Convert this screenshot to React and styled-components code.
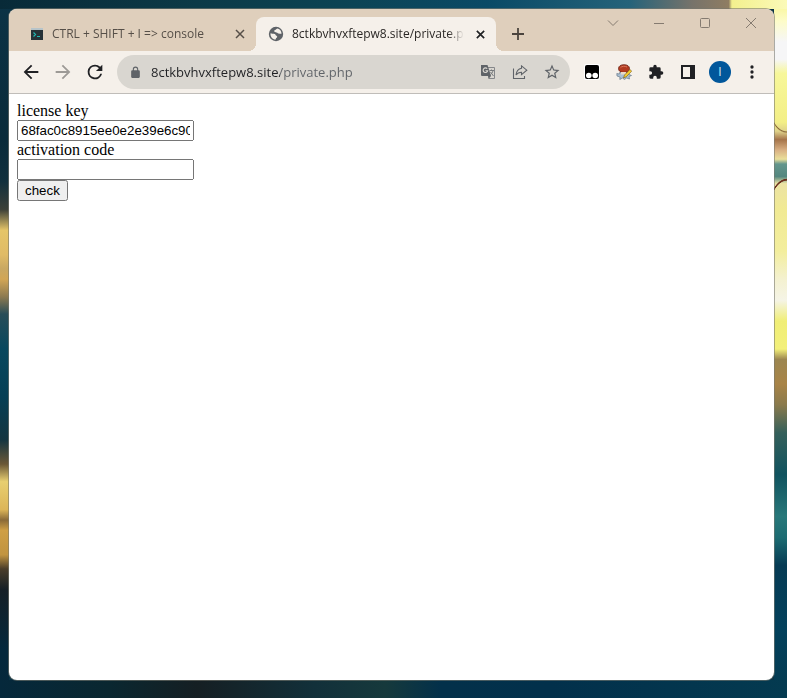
import styled, { createGlobalStyle } from 'styled-components'

const GlobalStyle = createGlobalStyle`
  * {
    box-sizing: border-box;
  }

  body {
    margin: 0;
  }
`;

const Desktop = styled.div`
  display: flex;
  flex-direction: column;
  min-height: 100vh;
  padding: 9px 13px 18px 9px;
  background:
    linear-gradient(90deg, #082a38 0%, #0c3a47 25%, #0c4455 45%, #0a4a66 62%, #25637a 80%, #77736a 88%, #8f7d62 92.6%, #f3f08e 93%, #fbfab8 100%) top / 100% 9px no-repeat,
    linear-gradient(90deg, #05283b 0%, #0a2730 14%, #151f23 25%, #12303a 40%, #16393c 49%, #03304a 56%, #02304b 70%, #043a50 100%) bottom / 100% 18px no-repeat,
    linear-gradient(180deg, #0b3346 0%, #0a2b3a 20%, #12303d 26%, #3c4038 30%, #e5c568 33%, #e0bb66 36.5%, #c9a862 38.5%, #d2a655 40%, #8d7a50 42.5%, #284d58 45%, #08485e 50%, #063f55 57%, #143540 63%, #6b5836 66.5%, #e8cf70 69%, #dcb558 73%, #8a6a38 74.5%, #cf9f45 76%, #c19440 79.5%, #4a3d2a 81.5%, #151f26 84.5%, #04283c 93%, #05283b 100%) left / 9px 100% no-repeat,
    radial-gradient(ellipse 20px 38px at 100% 38px, transparent 92%, #6b2f1c 94%, #6b2f1c 97%, transparent 99%) right 178px / 13px 38px no-repeat,
    radial-gradient(ellipse 18px 26px at 100% 0, transparent 88%, #8a6a3a 92%, transparent 97%) right 108px / 13px 26px no-repeat,
    linear-gradient(180deg, #f7f48f 0%, #fdfcc8 3%, #f6f6f7 6%, #f6f6f7 8.5%, #f7f79a 10.5%, #f3ef86 17.5%, #dfd28a 18.8%, #a5744a 20%, #d9b083 21.5%, #eadf9a 22.8%, #63958c 23.5%, #54877f 25.3%, #ece3a4 26.3%, #f1ea94 30%, #f3ee9d 36%, #f4f1d0 40%, #f5f4e6 43%, #f0ee76 46%, #f3f07a 50%, #9c8650 51.5%, #a88447 55%, #8a7a4c 58%, #35605b 62%, #10535f 68%, #28787a 74%, #1c6c72 77%, #063b54 81%, #03415c 90%, #043a50 100%) right / 13px 100% no-repeat,
    #0a3346;
`;

const Browser = styled.div`
  display: flex;
  flex: 1;
  flex-direction: column;
  overflow: hidden;
  border-radius: 8px;
  background: #fff;
  box-shadow: 0 0 0 1px rgba(120, 120, 110, 0.6);
`;

const TabStrip = styled.div`
  display: flex;
  height: 42px;
  padding-left: 7px;
  background: #dfcfbc;
`;

const Tabs = styled.div`
  display: flex;
  flex: 1;
  min-width: 0;
  padding-top: 8px;
`;

const Tab = styled.div`
  position: relative;
  display: flex;
  flex: 0 1 240px;
  align-items: center;
  gap: 8px;
  min-width: 0;
  padding: 0 8px 0 12px;
  border-radius: 8px 8px 0 0;
  background: ${({ $active }) => ($active ? '#f5f0ea' : 'transparent')};
  color: ${({ $active }) => ($active ? '#2a2725' : '#564f48')};

  &::before,
  &::after {
    content: '';
    position: absolute;
    bottom: 0;
    display: ${({ $active }) => ($active ? 'block' : 'none')};
    width: 8px;
    height: 8px;
  }

  &::before {
    right: 100%;
    background: radial-gradient(circle at 0 0, transparent 8px, #f5f0ea 8px);
  }

  &::after {
    left: 100%;
    background: radial-gradient(circle at 100% 0, transparent 8px, #f5f0ea 8px);
  }
`;

const TabTitle = styled.span`
  flex: 1;
  min-width: 0;
  overflow: hidden;
  font: 12px/18px "Open Sans", "Noto Sans", sans-serif;
  white-space: nowrap;
  mask-image: linear-gradient(90deg, #000 calc(100% - 16px), transparent);
`;

const IconButton = styled.button`
  display: flex;
  flex: none;
  align-items: center;
  justify-content: center;
  width: ${({ $width }) => $width || 32}px;
  height: ${({ $height }) => $height || 32}px;
  padding: 0;
  border: 0;
  background: none;
  color: ${({ $color }) => $color || '#202124'};
`;

const WindowControls = styled.div`
  display: flex;
  flex: none;
`;

const Toolbar = styled.div`
  display: flex;
  align-items: center;
  height: 43px;
  padding: 0 6px;
  border-bottom: 1px solid #c0bdb9;
  background: #f5f0ea;
`;

const Omnibox = styled.div`
  display: flex;
  flex: 1;
  align-items: center;
  min-width: 0;
  height: 34px;
  margin: 0 6px;
  padding: 0 2px 0 10px;
  border-radius: 17px;
  background: #d9d6d0;
`;

const UrlInput = styled.input`
  flex: 1;
  min-width: 0;
  margin-left: 8px;
  padding: 0;
  border: 0;
  outline: 0;
  background: linear-gradient(90deg, #202124 129px, #5f6368 129px);
  background-clip: text;
  color: transparent;
  font: 13px/20px "Open Sans", "Noto Sans", sans-serif;
`;

const Avatar = styled.span`
  width: 22px;
  height: 22px;
  border-radius: 50%;
  background: #01579b;
  color: #dce8f2;
  font: 12px/22px "Open Sans", "Noto Sans", sans-serif;
  text-align: center;
`;

const Page = styled.form`
  display: flex;
  flex-direction: column;
  align-items: flex-start;
  padding: 8px;
  color: #000;
  font: 16px/18px "Liberation Serif", serif;
`;

const Field = styled.input`
  width: 177px;
  height: 21px;
  font-family: "Liberation Sans", sans-serif;
`;

const Submit = styled.button`
  height: 21px;
  font-family: "Liberation Sans", sans-serif;
`;

function Icon({ size = 22, d }) {
  return (
    <svg width={size} height={size} viewBox="0 0 24 24" fill="currentColor" aria-hidden="true">
      <path d={d} />
    </svg>
  )
}

function Line({ size = 12, width = 1, d }) {
  return (
    <svg width={size} height={size} viewBox="0 0 12 12" fill="none" stroke="currentColor" strokeWidth={width} aria-hidden="true">
      <path d={d} />
    </svg>
  )
}

function ConsoleIcon() {
  return (
    <svg width="16" height="16" viewBox="0 0 16 16" aria-hidden="true">
      <path fill="#263238" d="M3 2h12v12H3z" />
      <path fill="#b7c4c9" d="M3 2h12v2H3z" />
      <path fill="none" stroke="#20b9b4" strokeWidth="1.2" d="M5.500 6.500l2 2-2 2M9 10.500h3" />
    </svg>
  )
}

function GlobeIcon() {
  return (
    <svg width="16" height="16" viewBox="0 0 16 16" aria-hidden="true">
      <circle cx="8" cy="8" r="7.200" fill="#5f6368" />
      <path fill="#f5f0ea" d="M9.500 2.500c-1 0-1 .8-1.800 1.200-.8.3-1.700.6-1.500 1.600.2.900 1.300 1 2.300 1.100 1 .1 1.300.9 2.200 1.200.9.300 1.800-.2 2.700.3.400-2.400-1.200-4.700-3.900-5.400z" />
      <path fill="#f5f0ea" d="M2.500 7.200c1 .2 1.500.6 2.500.6 1.100 0 2.300.1 2.600 1.200.3 1 1.600.7 1.600 1.700 0 .9-1 1-1.300 1.700-.2.500 0 .9-.3 1.200C4.600 13.500 2.200 10.700 2.500 7.200z" />
    </svg>
  )
}

function TranslateIcon() {
  return (
    <svg width="16" height="16" viewBox="0 0 16 16" aria-hidden="true">
      <path fill="none" stroke="#85878a" d="M7 3.500h7.500v11H9" />
      <path fill="#5f6368" d="M1 1h6.500l3.500 11H2a1 1 0 0 1-1-1z" />
      <path fill="#5f6368" d="M8 12h3l-2.500 3z" />
      <path fill="none" stroke="#d9d6d0" strokeWidth="1.1" d="M7.200 4.700a2.300 2.300 0 1 0 .5 2H5.500" />
      <path fill="none" stroke="#777a7d" d="M9.500 6.500H14M11.500 5.500v1M13 6.500c-.3 2-1.500 3.300-2.500 4M10.500 8l3 4" />
    </svg>
  )
}

function ShareIcon() {
  return (
    <svg width="16" height="16" viewBox="0 0 16 16" fill="none" stroke="#5f6368" strokeWidth="1.1" aria-hidden="true">
      <path d="M1.500 4.500v10h11V12" />
      <path d="M9.500 1.800l5.300 4.400-5.300 4.400V8.200c-2.500 0-4 .6-5.500 2.800.4-3.400 2-6 5.500-6.700z" />
    </svg>
  )
}

function MonkeyIcon() {
  return (
    <svg width="16" height="16" viewBox="0 0 16 16" aria-hidden="true">
      <rect width="16" height="16" rx="2" fill="#fff" />
      <rect x="1" y="1" width="14" height="14" rx="2" fill="#000" />
      <circle cx="4.800" cy="11.500" r="2.800" fill="#fff" />
      <circle cx="11.200" cy="11.500" r="2.800" fill="#fff" />
    </svg>
  )
}

function EditorIcon() {
  return (
    <svg width="16" height="16" viewBox="0 0 16 16" aria-hidden="true">
      <path fill="#a9bfd3" stroke="#6a7b8b" strokeWidth=".7" d="M.8 9.500l2.400.5.800-2h8l1 2.500 2.500 1-2.500 1 .5 2.500-3-1-2 1.500-2-1.500-2.700 1.500.2-2.500-3-1z" />
      <path fill="#b23a20" stroke="#6d2417" strokeWidth=".8" d="M2.500 4.500C2.500 2 4.800.7 8 .7s5.500 1.300 5.500 3.800S11.500 8.500 8 8.500s-5.500-1.500-5.500-4z" />
      <path fill="none" stroke="#d9785c" d="M4.500 3.700c1-1.500 4.500-2 6.500-.7" />
      <path fill="#e9d9c5" d="M5 8h5v2.500H5z" />
      <path fill="#f7cd2f" stroke="#6e5617" strokeWidth=".6" d="M7.500 14l1-3L14 5.500l1.700 1.700-5.500 5.600z" />
    </svg>
  )
}

function PanelIcon() {
  return (
    <svg width="14" height="14" viewBox="0 0 14 14" aria-hidden="true">
      <path fill="#202124" fillRule="evenodd" d="M0 0h14v14H0zM2 2v10h7V2z" />
    </svg>
  )
}

const BACK = 'M20 11H7.830l5.590-5.590L12 4l-8 8 8 8 1.410-1.410L7.830 13H20z'
const FORWARD = 'M12 4l-1.410 1.410L16.170 11H4v2h12.170l-5.580 5.590L12 20l8-8z'
const RELOAD = 'M17.650 6.350A7.960 7.960 0 0 0 12 4a8 8 0 1 0 7.730 10h-2.080A6 6 0 1 1 12 6c1.660 0 3.140.69 4.220 1.780L13 11h7V4z'
const LOCK = 'M18 8h-1V6A5 5 0 0 0 7 6v2H6a2 2 0 0 0-2 2v10c0 1.100.9 2 2 2h12a2 2 0 0 0 2-2V10a2 2 0 0 0-2-2zM9 6a3 3 0 0 1 6 0v2H9z'
const STAR = 'M22 9.240l-7.190-.62L12 2 9.190 8.630 2 9.240l5.460 4.730L5.820 21 12 17.270 18.180 21l-1.630-7.030zM12 15.400l-3.760 2.270 1-4.280-3.320-2.880 4.380-.38L12 6.100l1.710 4.040 4.380.38-3.320 2.880 1 4.280z'
const PUZZLE = 'M20.500 11H19V7a2 2 0 0 0-2-2h-4V3.500a2.500 2.500 0 0 0-5 0V5H4a2 2 0 0 0-2 2v3.800h1.500a2.700 2.700 0 0 1 0 5.400H2V20c0 1.100.9 2 2 2h3.800v-1.500a2.700 2.700 0 0 1 5.400 0V22H17a2 2 0 0 0 2-2v-4h1.500a2.500 2.500 0 0 0 0-5z'
const MORE = 'M12 8a2 2 0 1 0 0-4 2 2 0 0 0 0 4zm0 2a2 2 0 1 0 0 4 2 2 0 0 0 0-4zm0 6a2 2 0 1 0 0 4 2 2 0 0 0 0-4z'
const CROSS = 'M2 2l8 8M10 2l-8 8'

function App() {
  return (
    <>
      <GlobalStyle />
      <Desktop>
        <Browser>
          <TabStrip>
            <Tabs>
              <Tab>
                <ConsoleIcon />
                <TabTitle>CTRL + SHIFT + I =&gt; console</TabTitle>
                <IconButton $width={16} $height={16} $color="#564f48" aria-label="Close tab">
                  <Line d={CROSS} width={1.5} />
                </IconButton>
              </Tab>
              <Tab $active>
                <GlobeIcon />
                <TabTitle>8ctkbvhvxftepw8.site/private.php</TabTitle>
                <IconButton $width={16} $height={16} aria-label="Close tab">
                  <Line size={11} d={CROSS} width={1.8} />
                </IconButton>
              </Tab>
              <IconButton $width={44} $height={34} $color="#4b443e" aria-label="New tab">
                <Line d="M6 0v12M0 6h12" width={1.8} />
              </IconButton>
            </Tabs>
            <WindowControls>
              <IconButton $width={46} $height={28} $color="#857b70" aria-label="Search tabs">
                <Line d="M1 3.500l5 5 5-5" />
              </IconButton>
              <IconButton $width={46} $height={28} $color="#857b70" aria-label="Minimize">
                <Line d="M1 6.500h10" />
              </IconButton>
              <IconButton $width={46} $height={28} $color="#857b70" aria-label="Maximize">
                <svg width="10" height="10" viewBox="0 0 10 10" fill="none" stroke="currentColor" aria-hidden="true">
                  <rect x=".5" y=".5" width="9" height="9" rx="1" />
                </svg>
              </IconButton>
              <IconButton $width={46} $height={28} $color="#857b70" aria-label="Close">
                <Line d="M1 1l10 10M11 1L1 11" />
              </IconButton>
            </WindowControls>
          </TabStrip>
          <Toolbar>
            <IconButton aria-label="Back"><Icon d={BACK} /></IconButton>
            <IconButton $color="#9d9a96" aria-label="Forward"><Icon d={FORWARD} /></IconButton>
            <IconButton aria-label="Reload"><Icon d={RELOAD} /></IconButton>
            <Omnibox>
              <IconButton $width={16} $color="#5f6368" aria-label="Site information">
                <Icon size={13} d={LOCK} />
              </IconButton>
              <UrlInput aria-label="Address" defaultValue="8ctkbvhvxftepw8.site/private.php" />
              <IconButton aria-label="Translate"><TranslateIcon /></IconButton>
              <IconButton aria-label="Share"><ShareIcon /></IconButton>
              <IconButton $color="#5f6368" aria-label="Bookmark"><Icon size={18} d={STAR} /></IconButton>
            </Omnibox>
            <IconButton aria-label="User scripts"><MonkeyIcon /></IconButton>
            <IconButton aria-label="Cookie editor"><EditorIcon /></IconButton>
            <IconButton aria-label="Extensions"><Icon size={16} d={PUZZLE} /></IconButton>
            <IconButton aria-label="Side panel"><PanelIcon /></IconButton>
            <IconButton aria-label="Profile"><Avatar>I</Avatar></IconButton>
            <IconButton aria-label="Menu"><Icon size={20} d={MORE} /></IconButton>
          </Toolbar>
          <Page onSubmit={(e) => e.preventDefault()}>
            <label htmlFor="license">license key</label>
            <Field id="license" defaultValue="68fac0c8915ee0e2e39e6c90" />
            <label htmlFor="code">activation code</label>
            <Field id="code" />
            <Submit>check</Submit>
          </Page>
        </Browser>
      </Desktop>
    </>
  )
}

export default App
